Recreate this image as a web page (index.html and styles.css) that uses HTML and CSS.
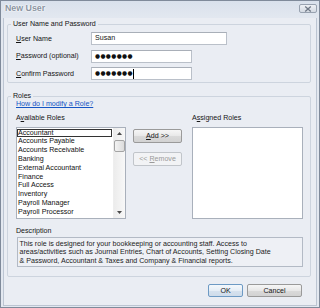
FILE: index.html
```html
<!DOCTYPE html>
<html>
<head>
<meta charset="utf-8">
<title>New User</title>
<link rel="stylesheet" href="styles.css">
</head>
<body>
<div class="window">
  <div class="titlebar">
    <span class="title">New User</span>
    <span class="close"><svg width="8" height="6" viewBox="0 0 8 6"><path d="M1.2 0.6 L6.8 5.4 M6.8 0.6 L1.2 5.4" stroke="#6f7886" stroke-width="1.3" fill="none"/></svg></span>
  </div>
  <div class="client">
    <fieldset class="group g1">
      <legend>User Name and Password</legend>
      <div class="form">
        <div class="row"><label class="lbl"><u>U</u>ser Name</label><div class="input wide">Susan</div></div>
        <div class="row"><label class="lbl"><u>P</u>assword (optional)</label><div class="input pw">●●●●●●●</div></div>
        <div class="row"><label class="lbl"><u>C</u>onfirm Password</label><div class="input pw">●●●●●●●<span class="caret"></span></div></div>
      </div>
    </fieldset>
    <fieldset class="group g2">
      <legend>Roles</legend>
      <div class="roles">
        <a class="link">How do I modify a Role?</a>
        <div class="cols">
          <div class="col avail">
            <div class="cap">A<u>v</u>ailable Roles</div>
            <div class="listbox">
              <ul class="items">
                <li class="sel">Accountant</li>
                <li>Accounts Payable</li>
                <li>Accounts Receivable</li>
                <li>Banking</li>
                <li>External Accountant</li>
                <li>Finance</li>
                <li>Full Access</li>
                <li>Inventory</li>
                <li>Payroll Manager</li>
                <li>Payroll Processor</li>
              </ul>
              <div class="scroll">
                <div class="arrow"><svg width="5" height="3" viewBox="0 0 5 3"><path d="M0 3 L2.5 0 L5 3 Z" fill="#4a4a4a"/></svg></div>
                <div class="thumb"></div>
                <div class="track"></div>
                <div class="arrow"><svg width="5" height="3" viewBox="0 0 5 3"><path d="M0 0 L5 0 L2.5 3 Z" fill="#4a4a4a"/></svg></div>
              </div>
            </div>
          </div>
          <div class="col mid">
            <button class="btn"><u>A</u>dd &gt;&gt;</button>
            <button class="btn dis">&lt;&lt; <u>R</u>emove</button>
          </div>
          <div class="col assigned">
            <div class="cap">A<u>s</u>signed Roles</div>
            <div class="listbox empty"></div>
          </div>
        </div>
        <div class="cap desc-cap">Description</div>
        <div class="desc">This role is designed for your bookkeeping or accounting staff. Access to<br>areas/activities such as Journal Entries, Chart of Accounts, Setting Closing Date<br>&amp; Password, Accountant &amp; Taxes and Company &amp; Financial reports.</div>
      </div>
    </fieldset>
    <div class="actions">
      <button class="btn ok">OK</button>
      <button class="btn cancel">Cancel</button>
    </div>
  </div>
</div>
</body>
</html>
```

FILE: styles.css
```css
* { box-sizing: border-box; }
html, body { margin: 0; padding: 0; }
body {
  width: 320px;
  height: 308px;
  overflow: hidden;
  font-family: "Liberation Sans", Arial, sans-serif;
  font-size: 7.1px;
  color: #151515;
  background: #dfe5ee;
}
.window {
  width: 320px;
  height: 308px;
  border: 1px solid #7f8a9a;
  background: linear-gradient(#d9e1ec, #e3e8f0 18px, #e3e8f0);
  display: flex;
  flex-direction: column;
}
.titlebar {
  height: 17px;
  flex: none;
  display: flex;
  align-items: flex-start;
  justify-content: space-between;
  padding: 2px 2px 0 4px;
}
.title {
  font-weight: bold;
  font-size: 8.8px;
  line-height: 10px;
  color: #8b95a2;
  text-shadow: 0 0 2px #ffffff, 0 0 2px #ffffff;
}
.close {
  width: 18px;
  height: 9px;
  margin-top: 1px;
  border: 1px solid #98a2b0;
  border-radius: 2px;
  background: linear-gradient(#eef1f5, #d4dae3);
  display: flex;
  align-items: center;
  justify-content: center;
}
.client {
  flex: 1;
  margin: 0 2px 1px 2px;
  border: 1px solid #bcc5d2;
  border-top: none;
  background: #eaedf3;
  padding: 2px 5px 0 3px;
  display: flex;
  flex-direction: column;
}
.group {
  margin: 0;
  padding: 0;
  border: 1px solid #cdd4de;
  border-radius: 2px;
  min-width: 0;
}
.group legend {
  margin-left: 3px;
  padding: 0 2px;
  line-height: 8px;
  height: 8px;
}
.form {
  padding: 4px 0 2px 8px;
  display: flex;
  flex-direction: column;
  gap: 4.5px;
}
.row {
  display: flex;
  align-items: center;
  height: 13px;
}
.lbl {
  width: 75px;
  flex: none;
}
.input {
  height: 13px;
  background: #ffffff;
  border: 1px solid #bac0c9;
  border-top-color: #a9afb8;
  padding: 0 3px;
  display: flex;
  align-items: center;
  line-height: 11px;
}
.input.wide { width: 136px; }
.input.pw {
  width: 101px;
  font-family: "DejaVu Sans", sans-serif;
  font-size: 5.8px;
  letter-spacing: 0.35px;
  color: #111;
}
.caret {
  display: inline-block;
  width: 1px;
  height: 10px;
  background: #000;
  margin-left: 0.5px;
}
.g2 { margin-top: 9px; }
.roles {
  padding: 0 7px 9px 8px;
  display: flex;
  flex-direction: column;
}
.link {
  line-height: 9px;
  color: #1555c4;
  text-decoration: underline;
  align-self: flex-start;
}
.cols {
  display: flex;
  margin-top: 5px;
}
.cap {
  line-height: 9px;
  height: 9px;
  margin-bottom: 4px;
}
.avail { width: 110px; }
.mid {
  width: 49px;
  margin-left: 7px;
  padding-top: 15px;
  display: flex;
  flex-direction: column;
  gap: 9px;
}
.assigned {
  width: 111px;
  margin-left: 10px;
}
.listbox {
  height: 92px;
  background: #ffffff;
  border: 1px solid #a9b0bb;
  display: flex;
}
.items {
  list-style: none;
  margin: 0;
  padding: 0.6px 0 0 0;
  flex: 1;
}
.items li {
  line-height: 8.8px;
  height: 8.8px;
  padding-left: 1px;
  white-space: nowrap;
  color: #111;
}
.items li.sel {
  outline: 1px solid #333;
  outline-offset: -1px;
  margin-right: 1px;
}
.scroll {
  width: 12px;
  flex: none;
  display: flex;
  flex-direction: column;
  background: linear-gradient(90deg, #ececec, #f8f8f8);
  border-left: 1px solid #eeeeee;
}
.arrow {
  height: 11px;
  display: flex;
  align-items: center;
  justify-content: center;
  flex: none;
}
.thumb {
  height: 12px;
  margin: 1px 0 0 0;
  border: 1px solid #a4a4a4;
  border-radius: 2px;
  background: linear-gradient(90deg, #f3f3f3, #dcdcdc);
  flex: none;
}
.track { flex: 1; }
.btn {
  font-family: "Liberation Sans", Arial, sans-serif;
  font-size: 7.1px;
  color: #151515;
  height: 14px;
  padding: 0;
  border: 1px solid #9a9a9a;
  border-radius: 2px;
  background: linear-gradient(#f6f6f6, #e8e8e8 50%, #dadada 51%, #d2d2d2);
  line-height: 12px;
}
.btn.dis {
  color: #9a9a9a;
  border-color: #c1c5ca;
  background: #f2f3f5;
}
.desc-cap {
  margin-top: 7.5px;
  margin-bottom: 1.5px;
}
.desc {
  height: 30px;
  margin-left: 1px;
  border: 1px solid #b3bac5;
  background: #eef0f5;
  padding: 1.5px 1.5px 0 1.5px;
  line-height: 8.7px;
  white-space: nowrap;
  color: #1c1c1c;
}
.actions {
  display: flex;
  justify-content: flex-end;
  gap: 4px;
  padding: 7px 9px 0 0;
}
.actions .btn { height: 13px; }
.btn.ok {
  width: 35px;
  border-color: #6d9ac4;
  background: linear-gradient(#f4f8fc, #e6eef6 50%, #d6e2ef 51%, #cfdcea);
}
.btn.cancel { width: 55px; }
```
